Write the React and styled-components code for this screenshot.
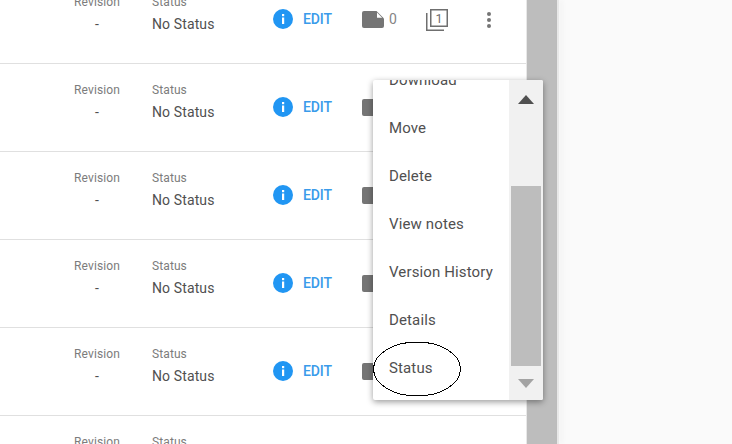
import styled, { createGlobalStyle } from "styled-components"

const GlobalStyle = createGlobalStyle`
  html, body {
    margin: 0;
    padding: 0;
    height: 444px;
    overflow: hidden;
    background: #fafafa;
    font-family: Roboto, "Liberation Sans", sans-serif;
  }
`

const Page = styled.div`
  position: relative;
  display: flex;
  width: 732px;
  height: 444px;
  overflow: hidden;
`
const Content = styled.div`
  width: 526px;
  height: 444px;
  flex: none;
  background: #fff;
  overflow: hidden;
`
const List = styled.div`
  display: flex;
  flex-flow: column;
  margin-top: -24px;
`
const Row = styled.div`
  display: flex;
  align-items: flex-start;
  flex: none;
  height: 87px;
  border-bottom: 1px solid #e0e0e0;
`
const Field = styled.div`
  display: flex;
  flex-flow: column;
  flex: none;
  width: ${props => props.w}px;
  margin-left: ${props => props.ml}px;
  padding-top: 18px;
  text-align: ${props => props.center ? "center" : "left"};
`
const Label = styled.span`
  font-size: 12px;
  line-height: 16px;
  letter-spacing: 0.1px;
  color: #7c7c7c;
`
const Value = styled.span`
  margin-top: 4px;
  font-size: 14px;
  line-height: 20px;
  letter-spacing: 0.12px;
  color: #505050;
`
const Actions = styled.div`
  display: flex;
  align-items: center;
  flex: none;
  margin-left: 31px;
  padding-top: 32px;
  height: 22px;
`
const EditText = styled.span`
  margin-left: 10px;
  font-size: 14px;
  font-weight: 500;
  letter-spacing: -0.1px;
  color: #3a9bea;
`
const NoteCount = styled.span`
  margin-left: 5px;
  font-size: 14px;
  color: #858585;
`
const NoteIcon = styled.svg`
  margin-left: 30px;
  flex: none;
`
const PagesIcon = styled.svg`
  margin-left: 29px;
  margin-top: 2px;
  flex: none;
`
const MoreIcon = styled.svg`
  margin-left: 38px;
  margin-top: 2px;
  flex: none;
`
const ScrollGutter = styled.div`
  flex: none;
  width: 31px;
  height: 444px;
  box-sizing: border-box;
  background: #bdbdbd;
  border-left: 1px solid #e8e8e8;
`
const ScrollEdge = styled.div`
  flex: none;
  width: 2px;
  height: 444px;
  background: #e8e8e8;
  box-shadow: 3px 0 5px rgba(0, 0, 0, 0.06);
`
const Menu = styled.div`
  position: absolute;
  left: 373px;
  top: 80px;
  display: flex;
  width: 170px;
  height: 320px;
  border-radius: 2px;
  background: #fff;
  box-shadow: 0 2px 6px rgba(0, 0, 0, 0.4);
  overflow: hidden;
  z-index: 2;
`
const MenuList = styled.div`
  flex: none;
  width: 136px;
  display: flex;
  flex-flow: column;
  margin-top: -24px;
`
const MenuItem = styled.div`
  flex: none;
  height: 48px;
  line-height: 48px;
  padding-left: 16px;
  font-size: 15px;
  letter-spacing: 0.13px;
  color: #505050;
`
const MenuTrack = styled.div`
  flex: none;
  display: flex;
  flex-flow: column;
  width: 34px;
  height: 320px;
  background: #f1f1f1;
`
const ArrowBox = styled.div`
  flex: none;
  display: flex;
  align-items: center;
  justify-content: center;
  height: ${props => props.h}px;
`
const Arrow = styled.div`
  width: 0;
  height: 0;
  border-left: 8px solid transparent;
  border-right: 8px solid transparent;
  ${props => props.up
    ? "border-bottom: 9px solid #505050;"
    : "border-top: 9px solid #a3a3a3;"}
`
const Thumb = styled.div`
  flex: none;
  height: 180px;
  margin: 0 2px;
  background: #bdbdbd;
`
const Ellipse = styled.svg`
  position: absolute;
  left: 372px;
  top: 342px;
  z-index: 3;
`

const items = ["Download", "Move", "Delete", "View notes", "Version History", "Details", "Status"]

function RowItem() {
  return (
    <Row>
      <Field ml={67} w={60} center>
        <Label>Revision</Label>
        <Value>-</Value>
      </Field>
      <Field ml={25} w={90}>
        <Label>Status</Label>
        <Value>No Status</Value>
      </Field>
      <Actions>
        <svg width="20" height="20" viewBox="0 0 20 20">
          <circle cx="10" cy="10" r="10" fill="#2196f3" />
          <rect x="9" y="8.500" width="2.200" height="6.500" fill="#fff" />
          <rect x="9" y="5" width="2.200" height="2.200" fill="#fff" />
        </svg>
        <EditText>EDIT</EditText>
        <NoteIcon width="22" height="17" viewBox="0 0 22 17">
          <path d="M2 0h12.500l7.500 7.500V15a2 2 0 0 1-2 2H2a2 2 0 0 1-2-2V2a2 2 0 0 1 2-2z" fill="#757575" />
          <path d="M15 1.500l5.200 5.300H15z" fill="#fff" />
        </NoteIcon>
        <NoteCount>0</NoteCount>
        <PagesIcon width="22" height="22" viewBox="0 0 22 22" fill="none">
          <rect x="4.750" y="0.750" width="16.500" height="16.500" stroke="#6f6f6f" strokeWidth="1.500" />
          <path d="M0.750 4v17.250H18" stroke="#6f6f6f" strokeWidth="1.500" />
          <text x="13" y="13.500" fontSize="12.500" textAnchor="middle" fill="#6f6f6f" fontFamily="Roboto, sans-serif">1</text>
        </PagesIcon>
        <MoreIcon width="6" height="18" viewBox="0 0 6 18">
          <circle cx="3" cy="3" r="2" fill="#757575" />
          <circle cx="3" cy="9" r="2" fill="#757575" />
          <circle cx="3" cy="15" r="2" fill="#757575" />
        </MoreIcon>
      </Actions>
    </Row>
  )
}

export default function App() {
  return (
    <Page>
      <GlobalStyle />
      <Content>
        <List>
          {[0, 1, 2, 3, 4, 5].map(i => <RowItem key={i} />)}
        </List>
      </Content>
      <ScrollGutter />
      <ScrollEdge />
      <Menu>
        <MenuList>
          {items.map(v => <MenuItem key={v}>{v}</MenuItem>)}
        </MenuList>
        <MenuTrack>
          <ArrowBox h={38}><Arrow up /></ArrowBox>
          <ArrowBox h={68} />
          <Thumb />
          <ArrowBox h={34}><Arrow /></ArrowBox>
        </MenuTrack>
      </Menu>
      <Ellipse width="90" height="56" viewBox="0 0 90 56" fill="none">
        <ellipse cx="45" cy="27" rx="43.500" ry="27" stroke="#000" strokeWidth="1" shapeRendering="crispEdges" />
      </Ellipse>
    </Page>
  )
}
